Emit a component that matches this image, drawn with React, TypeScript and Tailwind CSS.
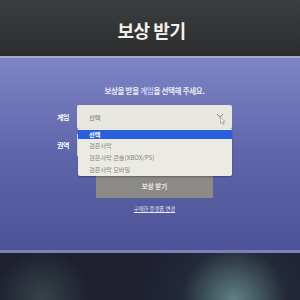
import React from "react";

const options = ["선택", "검은사막", "검은사막 콘솔(XBOX/PS)", "검은사막 모바일"];

const App = () => {
    return (
        <div className="w-[300px] h-[300px] overflow-hidden flex flex-col bg-[#22243a]" style={{ fontFamily: '"Noto Sans CJK KR", "Noto Sans", sans-serif' }}>
            {/* header */}
            <div className="h-[56px] shrink-0 flex items-center justify-center bg-gradient-to-b from-[#3b3e3f] to-[#2b2d2f]">
                <h1 className="text-[18px] font-bold text-[#f3f1ea] tracking-tight mt-[5px] ml-[3px]">보상 받기</h1>
            </div>

            {/* panel */}
            <div className="h-[197px] shrink-0 pl-[9px] border-t-2 border-[#a2a7d6] border-b-[3px] border-b-[#7a80ba] bg-gradient-to-b from-[#7e85c4] via-[#5e65aa] to-[#4c5396] flex flex-col items-center">
                <p className="mt-[27px] text-[7.5px] font-bold text-[#eceaf2] tracking-[-0.3px]">
                    보상을 받을 <span className="text-[#c9cdf5]">게임</span>을 선택해 주세요.
                </p>

                <div className="relative self-start ml-[48px] mt-[9px] flex flex-col gap-[4px]">
                    <div className="flex items-center gap-[6px]">
                        <span className="w-[14px] text-[7px] font-bold text-white whitespace-nowrap tracking-[-0.4px]">게임</span>
                        <div className="relative w-[155px] h-[24px] rounded-[2px] bg-[#e9e8e0] flex items-center justify-between pl-[12px] pr-[8px]">
                            <span className="text-[6.2px] text-[#6f6d66]">선택</span>
                            <svg width="8" height="6" viewBox="0 0 8 6" className="mt-[-2px]">
                                <path d="M1 1 L4 4.2 L7 1" fill="none" stroke="#8a8780" strokeWidth="1" />
                            </svg>
                            {/* mouse cursor */}
                            <svg width="6" height="8" viewBox="0 0 6 8" className="absolute right-[6px] top-[12px]">
                                <path d="M0.5 0.5 L0.5 6.5 L2 5 L3.2 7.5 L4.2 7 L3 4.6 L5.2 4.6 Z" fill="#f6f6f2" stroke="#8d8b86" strokeWidth="0.6" />
                            </svg>
                        </div>
                    </div>
                    <div className="flex items-center gap-[6px]">
                        <span className="w-[14px] text-[7px] font-bold text-white whitespace-nowrap tracking-[-0.4px]">권역</span>
                        <div className="w-[155px] h-[24px] rounded-[2px] bg-[#e9e8e0]" />
                    </div>

                    {/* open dropdown list */}
                    <div className="absolute left-[21px] top-[24px] w-[154px] bg-[#ecebe3] rounded-b-[2px] pb-[1px] shadow-[0_1px_2px_rgba(0,0,0,0.3)]">
                        {options.map((opt, i) => (
                            <div
                                key={i}
                                className={
                                    i === 0
                                        ? "h-[9px] mt-[1px] mb-[1px] flex items-center px-[11px] text-[6.2px] font-bold text-white bg-[#2a5fdc]"
                                        : "h-[11.7px] flex items-center px-[11px] text-[6.2px] text-[#85837b]"
                                }
                            >
                                {opt}
                            </div>
                        ))}
                    </div>
                </div>

                <button className="mt-[18px] w-[117px] h-[23px] bg-[#8c8a86] text-[6.5px] font-bold text-[#ece9e0] flex items-center justify-center">
                    보상 받기
                </button>

                <a className="mt-[8px] text-[5.3px] text-[#e8e8f4] underline">구매한 플랫폼 변경</a>
            </div>

            {/* bottom dark area */}
            <div className="flex-1 bg-[radial-gradient(circle_at_78%_100%,rgba(150,210,200,0.55),rgba(60,90,100,0.15)_22%,transparent_40%),radial-gradient(circle_at_14%_95%,rgba(110,150,130,0.3),transparent_18%)] bg-[#1e2030]" />
        </div>
    );
};

export default App;
